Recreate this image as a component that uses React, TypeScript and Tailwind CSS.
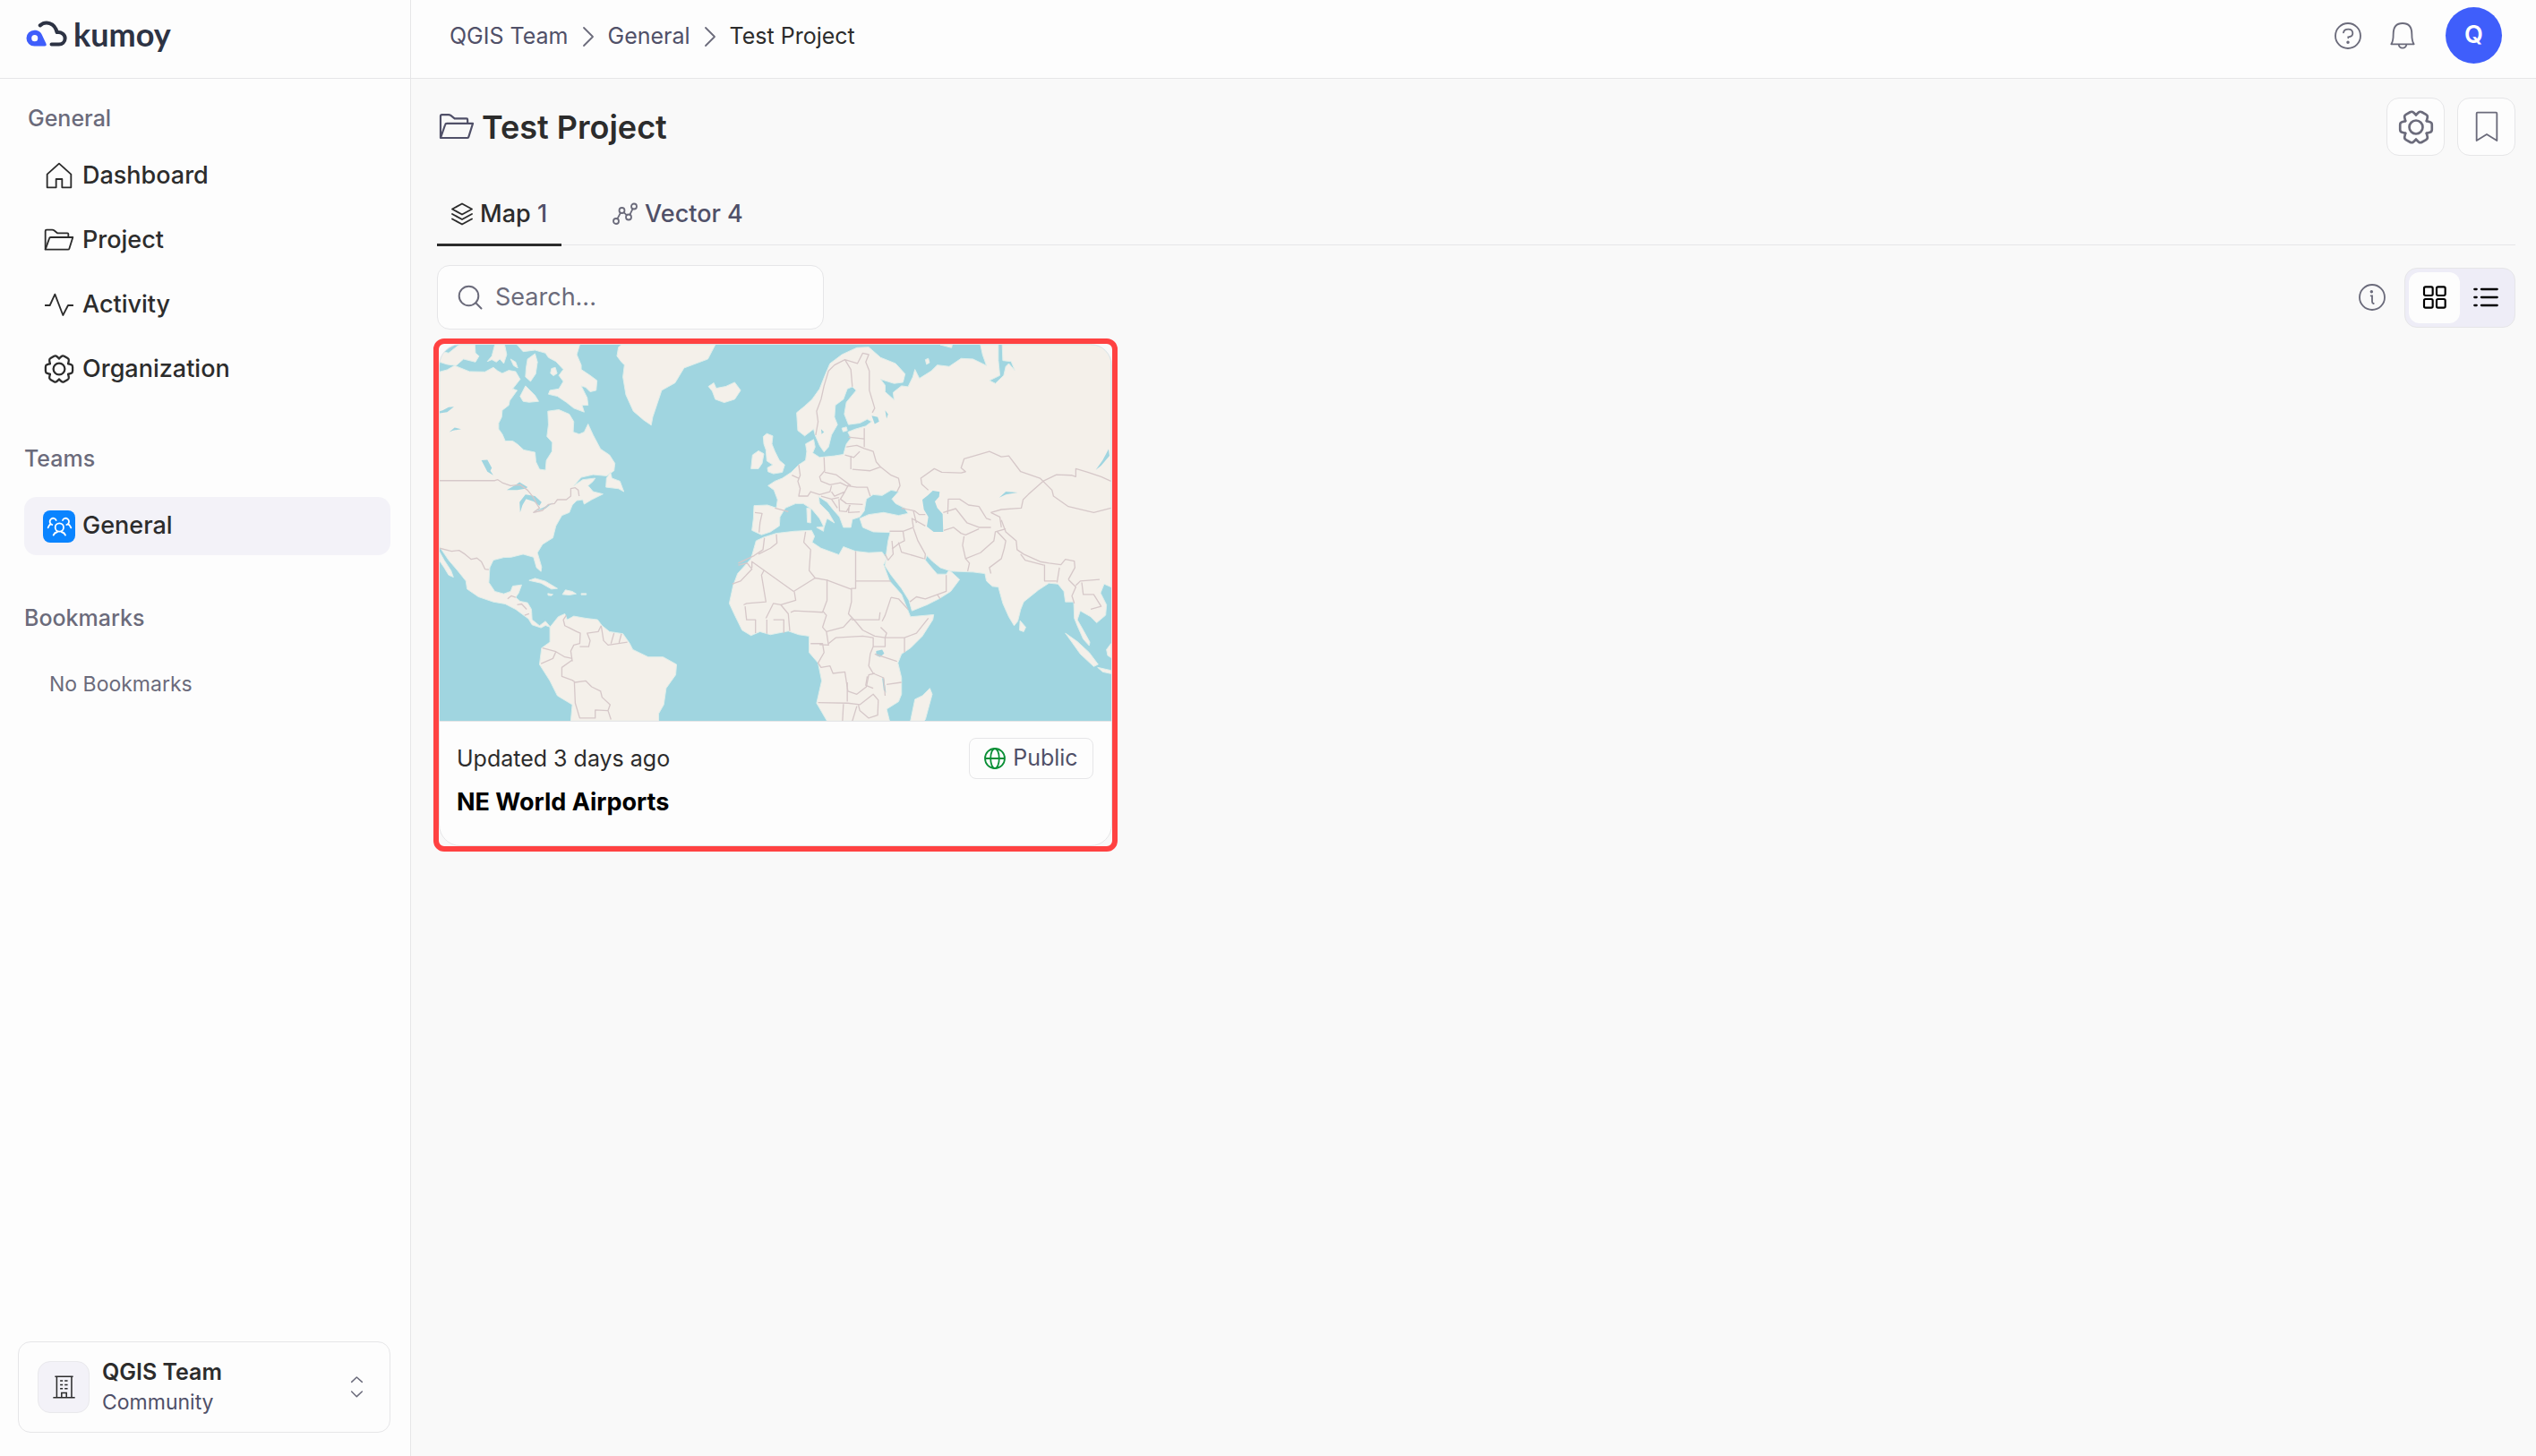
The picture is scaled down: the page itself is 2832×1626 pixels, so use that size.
import { useState } from "react";
import type { ReactNode } from "react";

type IconProps = { className?: string };

const gearTeeth = [0, 60, 120, 180, 240, 300];

function GearIcon({ className = "size-8" }: IconProps) {
  return (
    <svg viewBox="0 0 24 24" fill="none" stroke="currentColor" strokeWidth="1.6" strokeLinejoin="round" strokeLinecap="round" className={className} aria-hidden="true">
      {gearTeeth.map((deg) => (
        <path
          key={deg}
          d="M19.1 7.9 21.4 8.6Q22.67 9 22.67 10.4V13.6Q22.67 15 21.4 15.4L19.1 16.1"
          transform={`rotate(${deg} 12 12)`}
        />
      ))}
      <circle cx="12" cy="12" r="4.5" />
    </svg>
  );
}

function HomeIcon() {
  return (
    <svg viewBox="150 540 96 96" fill="none" stroke="currentColor" strokeWidth="5.5" strokeLinejoin="round" className="size-8" aria-hidden="true">
      <path d="M198 548 238 584V628H208V600H188V628H158V584Z" />
    </svg>
  );
}

function FolderIcon({ className = "w-[34px]" }: IconProps) {
  return (
    <svg viewBox="150 764 102 82" fill="none" stroke="currentColor" strokeWidth="5.5" strokeLinejoin="round" className={className} aria-hidden="true">
      <path d="M155 838V776Q155 772 159 772H178Q181 772 184 774L195 783H229Q232 783 232 786V796" />
      <path d="M155 838 168 801Q169 797 173 797H247L235 835Q234 838 231 838Z" />
    </svg>
  );
}

function ActivityIcon() {
  return (
    <svg viewBox="150 972 96 92" fill="none" stroke="currentColor" strokeWidth="5.5" strokeLinejoin="round" strokeLinecap="round" className="w-8" aria-hidden="true">
      <path d="M152 1020H167L184 983 211 1053 228 1020H244" />
    </svg>
  );
}

function TeamIcon() {
  return (
    <svg viewBox="144 270 108 108" fill="none" stroke="currentColor" strokeWidth="5.5" strokeLinecap="round" strokeLinejoin="round" className="size-9" aria-hidden="true">
      <circle cx="199" cy="327" r="14" />
      <path d="M179 353Q182 345 192 342M219 353Q216 345 206 342" />
      <path d="M188 303A11 11 0 1 0 170 315Q163 320 161 328M170 316 175 318" />
      <path d="M210 303A11 11 0 1 1 228 315Q235 320 238 328M228 316 223 318" />
    </svg>
  );
}

function BuildingIcon() {
  return (
    <svg viewBox="176 170 74 76" fill="none" stroke="currentColor" strokeWidth="4.5" className="w-[25px]" aria-hidden="true">
      <path d="M183 174H243M189 174V243M238 174V243M177 243H249M205 243V228H221V243" />
      <path d="M200 188H209M215 188H225M200 201H209M215 201H225M200 214H209M215 214H225" />
    </svg>
  );
}

function ChevronsIcon() {
  return (
    <svg viewBox="1176 170 45 78" fill="none" stroke="currentColor" strokeWidth="4.5" strokeLinecap="round" strokeLinejoin="round" className="w-[15px]" aria-hidden="true">
      <path d="M1181 192 1198 176 1216 192M1181 224 1198 241 1216 224" />
    </svg>
  );
}

function BreadcrumbArrow() {
  return (
    <svg viewBox="0 0 14 24" fill="none" stroke="currentColor" strokeWidth="1.8" strokeLinecap="round" strokeLinejoin="round" className="mt-[3px] h-6 w-3.5 text-[#6b6b7b]" aria-hidden="true">
      <path d="M2 2 12 12 2 22" />
    </svg>
  );
}

function HelpIcon() {
  return (
    <svg viewBox="138 72 96 96" fill="none" stroke="currentColor" strokeWidth="5.5" strokeLinecap="round" className="size-8" aria-hidden="true">
      <circle cx="186" cy="120" r="42" />
      <path d="M171 109Q173 98 187 98T202 111Q202 123 187 124V127" />
      <circle cx="186" cy="142" r="2.5" fill="currentColor" />
    </svg>
  );
}

function BellIcon() {
  return (
    <svg viewBox="321 72 96 96" fill="none" stroke="currentColor" strokeWidth="5.5" strokeLinejoin="round" className="size-8" aria-hidden="true">
      <path d="M331 148Q338 138 338 114Q338 78 369 78T400 114Q400 138 407 148Z" />
      <path d="M356 149Q358 161 369 161T382 149" />
    </svg>
  );
}

function BookmarkIcon() {
  return (
    <svg viewBox="608 372 84 112" fill="none" stroke="currentColor" strokeWidth="5.5" strokeLinejoin="round" className="w-7" aria-hidden="true">
      <path d="M616 383Q616 380 619 380H681Q684 380 684 383V474L650 453 616 474Z" />
    </svg>
  );
}

function LayersIcon() {
  return (
    <svg viewBox="0 0 24 26" fill="none" stroke="currentColor" strokeWidth="1.8" strokeLinejoin="round" strokeLinecap="round" className="w-6" aria-hidden="true">
      <path d="M12 1.5 23 7.5 12 13.5 1 7.5Z" />
      <path d="M1 13 12 19 23 13M1 18.5 12 24.5 23 18.5" />
    </svg>
  );
}

function VectorIcon() {
  return (
    <svg viewBox="0 0 28 26" fill="none" stroke="currentColor" strokeWidth="1.8" className="w-7 text-[#6b6b7b]" aria-hidden="true">
      <circle cx="4" cy="21" r="3" />
      <circle cx="10.5" cy="9" r="3" />
      <circle cx="18" cy="16.5" r="3" />
      <circle cx="24" cy="4.5" r="3" />
      <path d="M5.4 18.4 9 11.6M12.5 11.2 16 14.3M19.3 13.8 22.6 7.2" />
    </svg>
  );
}

function SearchIcon() {
  return (
    <svg viewBox="0 0 28 28" fill="none" stroke="currentColor" strokeWidth="2" strokeLinecap="round" className="size-7 shrink-0" aria-hidden="true">
      <circle cx="12.5" cy="12.5" r="10.8" />
      <path d="M20.3 20.3 26.5 26.5" />
    </svg>
  );
}

function InfoIcon() {
  return (
    <svg viewBox="219 948 96 96" fill="none" stroke="currentColor" strokeWidth="5.5" strokeLinecap="round" className="size-8" aria-hidden="true">
      <circle cx="267" cy="996" r="42" />
      <path d="M263 991H267V1010Q267 1016 272 1017" />
      <circle cx="265" cy="977" r="2.5" fill="currentColor" />
    </svg>
  );
}

function GridIcon() {
  return (
    <svg viewBox="432 954 84 84" fill="none" stroke="currentColor" strokeWidth="6.5" className="size-7" aria-hidden="true">
      <rect x="438" y="961" width="29" height="29" rx="5" />
      <rect x="480" y="961" width="29" height="29" rx="5" />
      <rect x="438" y="1002" width="29" height="29" rx="5" />
      <rect x="480" y="1002" width="29" height="29" rx="5" />
    </svg>
  );
}

function ListIcon() {
  return (
    <svg viewBox="604 950 90 90" fill="none" stroke="currentColor" strokeWidth="7" strokeLinecap="round" className="size-[30px]" aria-hidden="true">
      <path d="M611 968H618M634 968H687M611 995H618M634 995H687M611 1022H618M634 1022H687" />
    </svg>
  );
}

function GlobeIcon() {
  return (
    <svg viewBox="0 0 24 24" fill="none" stroke="currentColor" strokeWidth="1.8" className="size-6 text-[#0a8f36]" aria-hidden="true">
      <circle cx="12" cy="12" r="11" />
      <ellipse cx="12" cy="12" rx="4.8" ry="11" />
      <path d="M1 12H23" />
    </svg>
  );
}

function LogoMark() {
  return (
    <svg viewBox="88 62 140 92" className="w-[47px]" fill="none" aria-hidden="true">
      <path
        fill="#3f5efb"
        fillRule="evenodd"
        d="M116 97C132 97 138 105 142 114L155 142Q158 150 150 150H116A26.5 26.5 0 0 1 116 97ZM117 113A10.5 10.5 0 1 0 117 134A10.5 10.5 0 1 0 117 113Z"
      />
      <path stroke="#2d3344" strokeWidth="12" strokeLinecap="round" strokeLinejoin="round" d="M135 81C152 66 184 70 191 104C206 102 218 111 218 124S208 144 198 144H173" />
    </svg>
  );
}

// Units are thirds of a rendered pixel; eastern shapes sit in their own group.
const westLand = [
  "M30 100V62L60 70 95 42H148L150 70 162 80 150 100 110 90 85 112 55 108Z",
  "M30 133 55 126 80 112 130 132 182 133 210 118 225 130 240 138 262 128 285 132 300 158 275 190 290 195 265 230 262 245 240 262 238 285 228 305 228 325 240 342 250 365 275 365 290 375 312 395 350 403 353 435 365 460 385 463 388 430 407 400 408 370 390 350 395 310 393 265 430 260 465 275 480 300 478 335 498 342 515 335 528 308 545 345 570 392 600 412 618 440 615 465 590 482 545 478 505 487 480 515 510 495 552 490 545 500 528 515 545 535 578 543 540 562 515 577 510 562 490 565 475 580 465 605 440 615 420 650 410 690 375 712 358 740 372 788 370 803 355 790 345 755 310 745 270 755 245 756 210 765 198 790 195 840 215 870 245 878 268 870 275 852 305 848 295 875 285 890 300 903 325 908 338 930 340 965 365 985 385 970 402 990 385 984 370 992 340 982 328 962 305 945 285 930 250 912 210 905 160 888 122 862 118 835 90 800 60 765 35 728 30 725Z",
  "M30 738 45 765 68 800 76 822 60 815 45 790 30 768Z",
  "M215 42 248 42 255 75 245 105 232 90 220 100 205 92 190 98 205 80Z",
  "M268 90 285 100 292 120 278 112Z",
  "M325 90 350 72 358 100 352 140 335 165 318 150 320 120Z",
  "M300 215 318 180 350 212 362 232 330 235 310 232Z",
  "M290 42H500L490 75 505 110 505 125 535 145 558 162 555 195 535 200 520 185 505 180 525 220 528 245 508 245 515 268 480 255 455 235 425 215 395 208 400 195 430 190 445 165 430 145 445 125 420 98 395 85 385 70 350 60 310 65Z",
  "M405 122 418 118 424 138 412 146 402 138Z",
  "M588 520 590 490 603 470 608 490 635 500 648 535 630 525Z",
  "M640 100 625 80 630 50 640 42H955L930 90 850 120 820 170 775 195 760 240 745 285 740 312 715 295 680 265 655 210 645 150 650 110Z",
  "M945 198 932 182 950 170 958 188 990 182 1020 168 1040 195 1020 225 985 236 955 225Z",
  "M330 833 350 826 385 836 425 860 405 862 370 842Z",
  "M442 880 452 865 475 870 488 878 465 882Z",
  "M393 877 410 880 405 884 394 883Z",
  "M505 877H522V881H505Z",
  "M400 990 428 955 450 945 458 965 480 953 520 960 560 965 575 985 600 1005 645 1012 668 1045 678 1065 730 1090 780 1090 825 1115 822 1150 790 1195 782 1250 765 1280 765 1305H470L475 1250 425 1220 400 1170 365 1115 372 1060 400 1040Z",
];

const eastLand = [
  "M-55 582-10 580 20 590 24 562 12 530-8 515 15 500 40 490 70 470 95 445 118 430 122 400 118 375 145 360 150 385 142 405 165 420 215 415 245 410 255 375 270 355 260 335 285 325 320 315 340 300 325 292 300 305 262 310 248 275 255 235 288 195 275 183 258 190 245 225 218 245 215 285 225 310 205 345 195 385 180 402 165 380 150 345 145 325 115 348 92 330 88 270 115 248 140 225 165 190 185 140 200 105 240 75 290 52 330 50 370 85 420 105 452 140 445 168 415 172 370 158 385 178 385 200 415 227 412 202 440 180 462 183 478 150 485 125 500 155 540 130 560 110 600 115 640 88 680 90 725 112 712 75 705 42H765V95L770 145 735 162 755 172 783 145 790 115 800 105 820 128 808 98 780 95 778 42H1143V855L1120 845 1108 875 1128 915 1125 950 1095 975 1075 955 1040 935 1030 965 1050 1000 1072 1040 1070 1052 1050 1030 1030 985 1020 960 1018 905 990 905 985 870 965 845 935 842 900 865 850 905 840 930 830 970 818 985 800 955 780 910 765 855 745 853 725 835 720 810 680 805 605 802 570 790 545 770 525 750 520 765 545 795 560 812 590 812 600 798 635 830 605 870 565 895 525 915 475 935 465 900 440 860 405 815 385 785 390 735 395 700 402 672 345 670 310 655 300 625 330 612 380 605 430 615 462 608 450 590 420 575 408 560 430 535 405 530 375 548 345 545 322 560 315 600 300 620 275 628 270 655 245 655 232 620 210 595 190 570 162 552 165 575 195 605 215 640 190 625 180 655 165 625 140 595 110 575 85 575 50 590 32 620 30 650 0 670-30 680-62 665-57 625Z",
  "M-22 688 20 675 80 668 138 665 148 685 140 705 170 725 230 747 245 720 285 735 330 740 375 738 390 760 380 780 400 835 440 880 460 930 470 955 548 948 545 965 510 1020 470 1060 440 1080 428 1110 440 1160 440 1215 430 1240 390 1265 400 1305H190L155 1245 172 1170 160 1110 130 1075 130 1020 95 1015 60 1003 0 1015-35 1005-65 1018-95 1000-122 945-138 910-125 850-110 810-65 760-48 700Z",
  "M535 1195 543 1215 520 1300 515 1305H470L485 1232 510 1220Z",
  "M838 968 857 990 850 1005 836 1000Z",
  "M990 1010 1030 1038 1070 1075 1100 1115 1085 1122 1040 1080Z",
  "M1098 1125 1143 1135V1146L1115 1140Z",
  "M1128 1065 1143 1045V1092L1132 1085Z",
  "M-24 350-12 340 8 348 5 375 15 400 30 430 48 445 40 470 10 475-8 468-10 455 8 445-12 432-15 395-22 375Z",
  "M-65 458-60 412-40 398-22 408-28 440-40 458Z",
  "M122 590 135 592 135 640 124 638Z",
  "M155 655 180 652 178 668Z",
  "M520 92 530 88 534 102 524 108Z",
  "M570 42H610L608 52Z",
  "M240 322 255 318 258 330 244 334Z",
];

const westBorders = [
  "M30 498H215L225 495 240 505 268 515 300 512 325 530 345 555 355 575 365 590 345 605 375 598 395 578 415 575 425 562 455 562 470 550 470 525 485 522 495 530 498 550",
  "M30 725 70 735 95 732 115 745 135 762 155 758 170 770 182 795 195 797",
  "M258 895 270 885 285 890M290 915 305 912 322 930M315 950 330 945",
  "M455 950 445 965 450 985 465 992 490 1005 502 1010 500 1045 480 1050 470 1070 475 1105M500 1055 530 1055 535 1035 525 1010 562 1005 572 985M572 985 580 1035 595 1050 660 1040M615 1010 605 1045M640 1012 632 1042",
  "M375 1060 420 1072 450 1090 475 1095M420 1072 410 1095 370 1112M475 1100 440 1125 440 1155 475 1168 485 1175 520 1170 540 1190 570 1205 575 1225 602 1250 595 1270 552 1268V1295H500L485 1245 482 1175M595 1270 605 1300",
];

const eastBorders = [
  // Nordics, Baltics and central Europe
  "M152 345 160 300 155 265 170 225 180 180 195 130 215 110 250 92 270 125 275 183M250 92 292 105 310 70 330 75 320 100 332 130 332 195 350 255 342 270",
  "M315 322V385M262 352 315 358M255 385 290 380 315 390 345 400 355 435 372 455M250 412 280 420 300 400M270 415V460M275 460 335 465 370 452 405 480 430 490 435 515 425 535",
  "M180 420 182 465 165 485 170 500 200 512M182 470 220 478 270 515M200 512 235 505 255 515 290 520 325 520 335 550M95 445 100 480 92 500 100 525 95 550 125 550 135 535 165 545 200 535 205 515M72 480 95 490M15 590 60 602",
  "M205 535 215 550 250 535 262 512M250 535 235 560 255 575 310 578M170 550 205 560 230 555M230 560 232 600 255 602 268 580M205 560 225 590M265 580 262 605 300 603",
  "M-52 605-28 608-35 640-38 672",
  // Caucasus, Middle East and central Asia
  "M440 590 485 600 500 612 520 612M400 668 445 668 480 655 475 625 520 650M480 600 490 640M480 658 495 700 520 745 518 762M445 668 450 700 430 710 408 728M430 705 440 738 515 760M385 745 395 765 412 745 408 700",
  "M468 905 490 888 520 895 590 870 590 815M560 880 570 895",
  "M530 530 508 510 505 490 550 458 575 470 640 472 655 468 640 455 650 425 735 400 775 418 800 415 840 468 905 490 915 500 865 545 848 562 842 590 775 595 740 605",
  "M595 610 597 560 635 560 665 580 700 585 725 625 740 630M580 605 622 592 660 640 700 655 740 655M582 665 615 655 640 675 655 680 700 660M650 685 645 715 655 760 705 740 750 700 755 670 790 660M740 605 770 620 775 655",
  "M655 760 668 775 662 802M740 810 735 790 775 760 785 725 790 700 760 668M775 630 790 670 825 700 828 730 850 745 905 770 935 775M840 745 855 765 918 782M935 775 975 780 990 762 1020 768 1022 790 1000 830",
  "M915 500 960 478 1010 480 1025 485 1025 458 1065 470 1110 485 1143 500M915 500 945 530 950 550 1000 585 1085 605 1143 590",
  "M920 780V835H960M970 790 962 840M1000 830 1025 855 1012 885 1020 910M1025 850 1040 835 1105 830M1045 840 1050 880 1085 880 1110 920 1075 930",
  // Africa
  "M-20 690-25 730-55 750-108 775M-108 782-78 775-62 795-100 835-128 845M-62 790V770L78 870M-22 800-30 815-15 905-80 910-90 915M20 678 22 708 0 725-40 745",
  "M78 870 150 825 130 800 135 730 112 705 118 670M150 825 190 832 270 862M286 735V835H405M286 835V860H272V905L262 945 285 970",
  "M80 870 85 900 35 915 10 910-15 960M190 830V900L175 940 80 935 68 940M175 935 188 950 175 990 188 1005 245 990 272 960M35 915 60 945 65 1003M10 965H45V1010M-12 965V1012M-85 920-80 965-50 965-50 1010",
  "M272 965 365 965 368 940M285 970 310 1000 350 1020 385 1025 390 1010 370 990M405 890 385 950 375 970M405 890 430 895 462 930M385 1025 450 1025 490 1010 530 960M450 1025V1075",
  "M188 1005 195 1050 165 1048M135 1045H175L180 1075 160 1110 170 1125 200 1120 210 1145 250 1140 260 1205 290 1215 322 1190 330 1150 350 1145",
  "M195 1045 220 1025 310 1020 345 1025V1055L335 1080 330 1120 345 1145 380 1160 385 1220M345 1055H385L385 1025M350 1080 425 1105M390 1182 440 1175M325 1155 320 1185 345 1195",
  "M160 1243 260 1245 300 1250 345 1215 362 1235 360 1285 330 1295 300 1270 295 1250M258 1175V1240M245 1248 242 1305M290 1255 275 1305",
];

const eastWater = [
  "M510 562 528 548 545 532 568 536 566 552 552 568 560 590 578 610 580 670 548 670 525 652 530 620 515 595Z",
  "M355 1070 375 1065 382 1078 368 1090 355 1085Z",
  "M1135 392 1138 415 1110 448 1092 462 1115 430Z",
  "M340 280 360 285 365 300 350 308Z",
  "M385 262 395 275 390 290Z",
  "M170 325 180 335 172 342Z",
  "M768 555 790 535 830 538 790 545Z",
  "M375 1160 382 1165 388 1210 380 1200Z",
];

const westWater = [
  "M255 530 285 512 298 503 325 520 318 525 290 530Z",
  "M300 605 298 570 318 545 350 550 372 570 365 582 345 568 320 560 308 580Z",
  "M345 602 375 590 410 572 385 592Z",
  "M170 430 190 428 205 455 200 465 210 480 190 468Z",
  "M30 272 55 268 78 250 60 252 40 262 30 265Z",
  "M62 335 80 320 102 325 75 330Z",
];

function WorldMap() {
  return (
    <svg viewBox="30 42 2253 1263" role="img" aria-label="World map preview" className="block w-full bg-[#a0d5e0]">
      <g fill="#f4f0ea" stroke="#e0eeea" strokeWidth="3" strokeLinejoin="round">
        {westLand.map((d) => <path key={d} d={d} />)}
      </g>
      <g fill="#a0d5e0">
        {westWater.map((d) => <path key={d} d={d} />)}
      </g>
      <g fill="none" stroke="#d6c8c9" strokeWidth="4" strokeLinejoin="round">
        {westBorders.map((d) => <path key={d} d={d} />)}
      </g>
      <g transform="translate(1140 0)">
        <g fill="#f4f0ea" stroke="#e0eeea" strokeWidth="3" strokeLinejoin="round">
          {eastLand.map((d) => <path key={d} d={d} />)}
        </g>
        <g fill="#a0d5e0">
          {eastWater.map((d) => <path key={d} d={d} />)}
        </g>
        <g fill="none" stroke="#d6c8c9" strokeWidth="4" strokeLinejoin="round">
          {eastBorders.map((d) => <path key={d} d={d} />)}
        </g>
      </g>
    </svg>
  );
}

const navItems: { label: string; icon: ReactNode }[] = [
  { label: "Dashboard", icon: <HomeIcon /> },
  { label: "Project", icon: <FolderIcon /> },
  { label: "Activity", icon: <ActivityIcon /> },
  { label: "Organization", icon: <GearIcon className="size-[34px]" /> },
];

function Sidebar() {
  return (
    <aside className="flex w-[459px] shrink-0 flex-col border-r border-[#e6e6e8] bg-[#fdfdfd]">
      <div className="flex h-[88px] items-center border-b border-[#e6e6e8] pb-3 pl-[29px]">
        <a href="#home" className="flex items-center gap-1.5">
          <LogoMark />
          <span className="font-['Lato',sans-serif] text-[36px] leading-[44px] font-bold text-[#2d3344]">kumoy</span>
        </a>
      </div>

      <nav className="flex flex-1 flex-col pt-7 pr-[22px] pl-[27px]">
        <h2 className="mb-4 pl-1 text-[25px] leading-8 font-medium text-[#6b6b7b]">General</h2>
        <ul className="flex flex-col gap-2">
          {navItems.map((item) => (
            <li key={item.label}>
              <a href={`#${item.label.toLowerCase()}`} className="flex h-16 items-center gap-2 rounded-[14px] pl-[21px] text-[27px] font-medium">
                <span className="flex w-9 justify-center">{item.icon}</span>
                {item.label}
              </a>
            </li>
          ))}
        </ul>

        <h2 className="mt-[52px] mb-[27px] text-[25px] leading-8 font-medium text-[#6b6b7b]">Teams</h2>
        <a href="#general" className="flex h-[65px] items-center gap-2 rounded-[14px] bg-[#f3f2f8] pl-[21px] text-[27px] font-medium">
          <span className="rounded-lg bg-[#0a84ff] text-white">
            <TeamIcon />
          </span>
          General
        </a>

        <h2 className="mt-[54px] text-[25px] leading-8 font-medium text-[#6b6b7b]">Bookmarks</h2>
        <p className="mt-[42px] pl-7 text-[23px] leading-8 text-[#6b6b7b]">No Bookmarks</p>
      </nav>

      <button type="button" className="mr-[22px] mb-[26px] ml-5 flex items-center rounded-[14px] border border-[#e6e6e8] py-[21px] pr-[29px] pl-[21px] text-left">
        <span className="flex size-[58px] items-center justify-center rounded-[14px] border border-[#e9e9ec] bg-[#f3f2f8]">
          <BuildingIcon />
        </span>
        <span className="-my-1.5 ml-3.5 flex flex-1 flex-col">
          <span className="text-[25px] leading-[34px] font-semibold">QGIS Team</span>
          <span className="text-[23px] leading-[34px] text-[#505068]">Community</span>
        </span>
        <span className="text-[#6b6b7b]">
          <ChevronsIcon />
        </span>
      </button>
    </aside>
  );
}

function TopBar() {
  return (
    <header className="flex h-[88px] items-center justify-between border-b border-[#e6e6e8] bg-[#fdfdfd] pr-[38px] pb-2 pl-[43px]">
      <nav aria-label="Breadcrumb" className="flex items-center gap-[15px] text-[25px] leading-8 text-[#505068]">
        <a href="#team">QGIS Team</a>
        <BreadcrumbArrow />
        <a href="#general">General</a>
        <BreadcrumbArrow />
        <span aria-current="page" className="text-[#2c2c2c]">Test Project</span>
      </nav>
      <div className="flex items-center text-[#6b6b7b]">
        <button type="button" aria-label="Help" className="mr-[29px]"><HelpIcon /></button>
        <button type="button" aria-label="Notifications" className="mr-8"><BellIcon /></button>
        <button type="button" className="size-[63px] rounded-full bg-[#3f5efb] text-[27px] font-semibold text-white">Q</button>
      </div>
    </header>
  );
}

function MapCard() {
  return (
    <div className="-mx-1.5 overflow-hidden rounded-xl border-6 border-[#ff4242]">
      <article className="overflow-hidden rounded-3xl border border-[#e6e6e8] bg-[#fdfdfd]">
        <WorldMap />
        <div className="border-t border-[#e6e6e8] pt-[18px] pr-5 pb-[30px] pl-[19px]">
          <div className="flex items-center justify-between">
            <p className="text-[25px] leading-8">Updated 3 days ago</p>
            <span className="flex h-[46px] items-center gap-2 rounded-lg border border-[#e6e6e8] px-4 text-[25px] text-[#505068]">
              <GlobeIcon />
              Public
            </span>
          </div>
          <h3 className="mt-2 text-[27px] leading-9 font-bold text-black">NE World Airports</h3>
        </div>
      </article>
    </div>
  );
}

export default function App() {
  const [tab, setTab] = useState<"map" | "vector">("map");
  const [view, setView] = useState<"grid" | "list">("grid");
  const [query, setQuery] = useState("");

  const activeTab = "border-[#2c2c2c] text-[#2c2c2c]";
  const idleTab = "border-transparent text-[#505068]";

  return (
    <div className="flex min-h-screen bg-[#f9f9f9] font-['Inter',sans-serif] text-[#2c2c2c]">
      <Sidebar />
      <div className="flex min-w-0 flex-1 flex-col">
        <TopBar />
        <main className="flex-1 pt-[21px] pr-[23px] pl-[29px]">
          <div className="flex items-center justify-between">
            <h1 className="flex items-center gap-2 pl-0.5 text-[36px] leading-[44px] font-semibold">
              <FolderIcon className="w-10 text-[#505068]" />
              Test Project
            </h1>
            <div className="flex gap-3.5 text-[#6b6b7b]">
              <button type="button" aria-label="Project settings" className="flex size-[65px] items-center justify-center rounded-[14px] border border-[#e6e6e8] bg-[#fdfdfd]">
                <GearIcon className="size-10" />
              </button>
              <button type="button" aria-label="Bookmark project" className="flex size-[65px] items-center justify-center rounded-[14px] border border-[#e6e6e8] bg-[#fdfdfd]">
                <BookmarkIcon />
              </button>
            </div>
          </div>

          <div role="tablist" className="mt-[30px] flex h-[70px] gap-[41px] border-b border-[#e6e6e8] text-[27px] font-medium">
            <button
              type="button"
              role="tab"
              aria-selected={tab === "map"}
              onClick={() => setTab("map")}
              className={`flex h-[71px] items-center gap-2 border-b-3 px-4 pt-0.5 ${tab === "map" ? activeTab : idleTab}`}
            >
              <LayersIcon />
              <span>
                Map <span className="text-[#505068]">1</span>
              </span>
            </button>
            <button
              type="button"
              role="tab"
              aria-selected={tab === "vector"}
              onClick={() => setTab("vector")}
              className={`flex h-[71px] items-center gap-2 border-b-3 px-4 pt-0.5 ${tab === "vector" ? activeTab : idleTab}`}
            >
              <VectorIcon />
              <span>Vector 4</span>
            </button>
          </div>

          <div className="mt-[22px] flex items-center justify-between">
            <label className="flex h-[72px] w-[432px] items-center gap-[14px] rounded-[14px] border border-[#e6e6e8] bg-[#fdfdfd] px-[22px] text-[#6b6b7b]">
              <SearchIcon />
              <input
                type="text"
                aria-label="Search maps"
                placeholder="Search..."
                value={query}
                onChange={(e) => setQuery(e.target.value)}
                className="min-w-0 flex-1 bg-transparent text-[27px] text-[#2c2c2c] outline-none placeholder:text-[#6b6b7b]"
              />
            </label>
            <div className="flex items-center gap-5">
              <button type="button" aria-label="About this view" className="text-[#6b6b7b]"><InfoIcon /></button>
              <div className="flex h-[67px] rounded-[14px] border border-[#e6e6e8] bg-[#eeedf7] p-1 text-black">
                <button
                  type="button"
                  aria-label="Grid view"
                  aria-pressed={view === "grid"}
                  onClick={() => setView("grid")}
                  className={`flex w-[57px] items-center justify-center rounded-xl ${view === "grid" ? "bg-[#fdfdfd]" : ""}`}
                >
                  <GridIcon />
                </button>
                <button
                  type="button"
                  aria-label="List view"
                  aria-pressed={view === "list"}
                  onClick={() => setView("list")}
                  className={`flex w-[57px] items-center justify-center rounded-xl ${view === "list" ? "bg-[#fdfdfd]" : ""}`}
                >
                  <ListIcon />
                </button>
              </div>
            </div>
          </div>

          <div className="mt-2.5 ml-0.5 grid grid-cols-3 gap-8">
            <MapCard />
          </div>
        </main>
      </div>
    </div>
  );
}
